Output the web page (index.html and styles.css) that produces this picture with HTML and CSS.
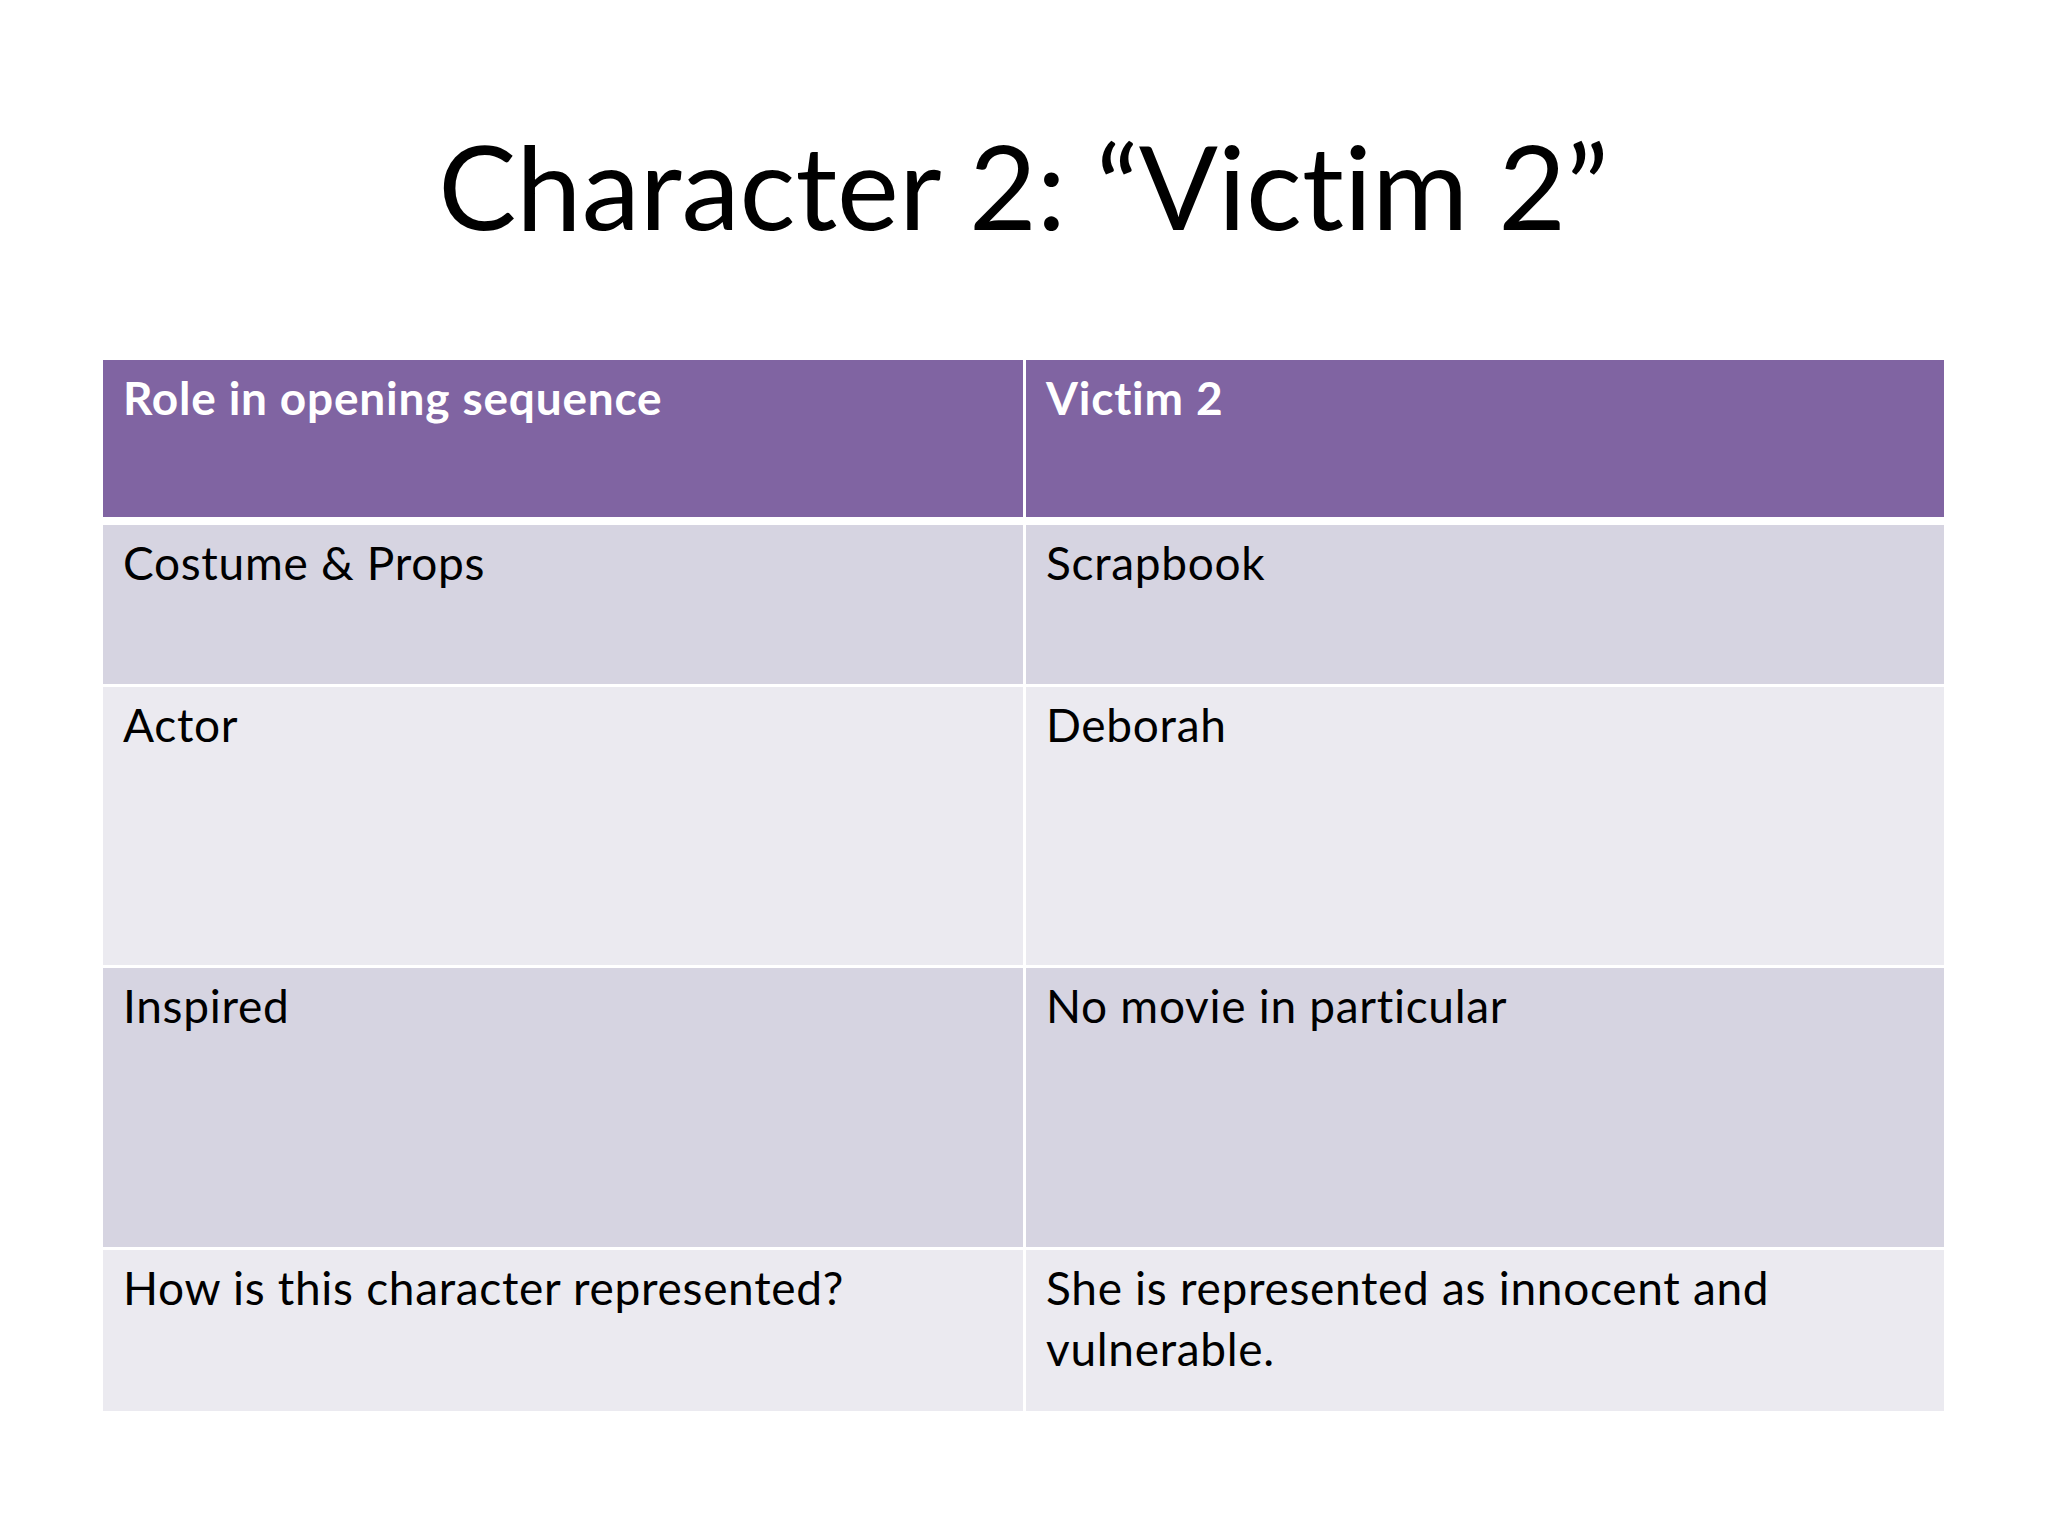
FILE: index.html
```html
<!DOCTYPE html>
<html lang="en">
<head>
<meta charset="utf-8">
<title>Character 2: “Victim 2”</title>
<link rel="stylesheet" href="styles.css">
</head>
<body>
<main class="slide">
  <h1 class="title">Character 2: “Victim 2”</h1>
  <div class="table">
    <div class="row head">
      <div class="cell">Role in opening sequence</div>
      <div class="cell">Victim 2</div>
    </div>
    <div class="row band r1">
      <div class="cell">Costume &amp; Props</div>
      <div class="cell">Scrapbook</div>
    </div>
    <div class="row light r2">
      <div class="cell">Actor</div>
      <div class="cell">Deborah</div>
    </div>
    <div class="row band r3">
      <div class="cell">Inspired</div>
      <div class="cell">No movie in particular</div>
    </div>
    <div class="row light r4">
      <div class="cell">How is this character represented?</div>
      <div class="cell">She is represented as innocent and vulnerable.</div>
    </div>
  </div>
</main>
</body>
</html>
```

FILE: styles.css
```css
html, body {
  margin: 0;
  padding: 0;
  background: #ffffff;
}

.slide {
  width: 2048px;
  height: 1536px;
  box-sizing: border-box;
  padding: 115px 104px 0 103px;
  font-family: Lato, "Open Sans", "Liberation Sans", sans-serif;
  font-variant-ligatures: none;
  color: #000000;
}

.title {
  margin: 0 0 105px 0;
  font-size: 117px;
  line-height: 140px;
  font-weight: 400;
  text-align: center;
}

.table {
  display: flex;
  flex-direction: column;
  gap: 3px;
  width: 1841px;
}

.row {
  display: grid;
  grid-template-columns: 920px 918px;
  column-gap: 3px;
}

.cell {
  box-sizing: border-box;
  padding: 7px 20px 0 20px;
  font-size: 46px;
  line-height: 61px;
  letter-spacing: 0.7px;
}

.head { height: 157px; margin-bottom: 5px; }
.head .cell {
  background: #8064a2;
  color: #ffffff;
  font-weight: 700;
  letter-spacing: 0.8px;
}

.band .cell { background: #d6d4e1; }
.light .cell { background: #ebeaf0; }

.r1 { height: 159px; }
.r2 { height: 278px; }
.r3 { height: 279px; }
.r4 { height: 161px; }
```
